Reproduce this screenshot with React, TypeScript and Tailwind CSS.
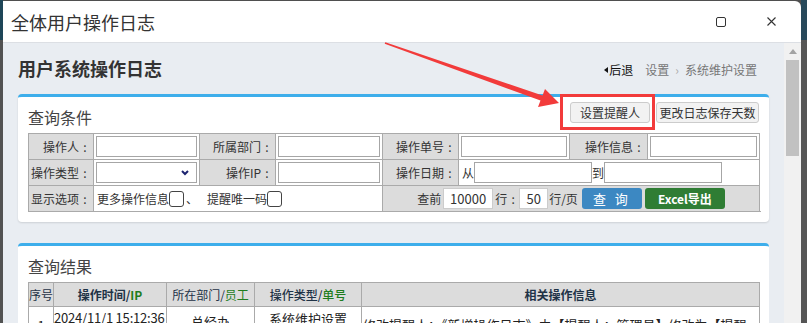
import { ReactNode } from "react";

const cell = "border border-[#aaa] p-0";

function Colon() {
  return <span className="inline-block w-[12px] text-center">:</span>;
}

function Label({ children }: { children: ReactNode }) {
  return (
    <td className={`${cell} bg-[#dcdcdc] pr-[2px] text-right whitespace-nowrap`}>
      {children}
      <Colon />
    </td>
  );
}

function Field({ children }: { children?: ReactNode }) {
  return (
    <td className={`${cell} bg-white px-[2px]`}>
      {children ?? <input className="block h-[21px] w-full border border-[#a6a6a6] bg-white outline-none" />}
    </td>
  );
}

function Check() {
  return <input type="checkbox" className="h-[16px] w-[15px] appearance-none rounded-[3px] border border-[#444] bg-white" />;
}

function Arrow() {
  return (
    <svg className="pointer-events-none absolute left-0 top-0" width="807" height="323" viewBox="0 0 807 323">
      <polygon
        points="385.3,42.3 542.5,95.4 545,89 559,103 538,107 540.5,100.6 384.7,43.7"
        fill="#f23b3b"
      />
    </svg>
  );
}

export default function App() {
  return (
    <div className="relative flex h-[323px] w-[807px] overflow-hidden bg-[#4f4f4f] font-['Noto_Sans_CJK_SC','Microsoft_YaHei',sans-serif]">
      {/* backdrop edges */}
      <div className="flex w-[3px] flex-col">
        <div className="h-[40px] bg-[#1e4658]" />
        <div className="flex-1 bg-[#525252]" />
      </div>

      {/* dialog */}
      <div className="mt-[1px] flex w-[798px] flex-col overflow-hidden rounded-tr-[6px] bg-white">
        <div className="flex h-[42px] shrink-0 items-center justify-between border-b border-[#dcdfe4] pl-[8px] pr-[25px]">
          <span className="text-[18px] leading-[24px] text-[#333]">全体用户操作日志</span>
          <div className="flex items-center gap-[41px]">
            <span className="block h-[10px] w-[10px] rounded-[2px] border border-[#333]" />
            <svg width="9" height="9" viewBox="0 0 9 9" className="text-[#333]">
              <path d="M0.5 0.5L8.5 8.5M8.5 0.5L0.5 8.5" stroke="currentColor" strokeWidth="1.1" />
            </svg>
          </div>
        </div>

        <div className="flex min-h-0 flex-1">
          <main className="min-w-0 flex-1 overflow-hidden bg-[#e9edf2] px-[15px]">
            <div className="flex items-end justify-between pt-[12px]">
              <h1 className="text-[18px] font-bold leading-[26px] text-[#333]">用户系统操作日志</h1>
              <nav className="flex items-center pb-[2px] pr-[12px] text-[12px] leading-[18px] text-[#777]">
                <svg width="4" height="6" viewBox="0 0 4 6" className="mr-[1px]">
                  <path d="M4 0L0 3L4 6Z" fill="#111" />
                </svg>
                <span className="text-[#111]">后退</span>
                <span className="ml-[12px]">设置</span>
                <span className="mx-[6px] text-[#aaa]">›</span>
                <span>系统维护设置</span>
              </nav>
            </div>

            {/* query panel */}
            <section className="mt-[13px] rounded-[4px] border-t-[3px] border-[#3daeeb] bg-white px-[10px] pb-[10px] shadow-[0_1px_2px_rgba(0,0,0,0.12)]">
              <div className="flex h-[36px] items-center justify-between">
                <h2 className="pt-[3px] text-[16px] text-[#444]">查询条件</h2>
                <div className="mb-[5px] flex gap-[6px] text-[12px] text-[#333]">
                  <button className="h-[21px] w-[80px] rounded-[3px] border border-[#ccc] bg-[#f2f2f2]">设置提醒人</button>
                  <button className="h-[21px] w-[103px] rounded-[3px] border border-[#ccc] bg-[#f2f2f2]">更改日志保存天数</button>
                </div>
              </div>

              <table className="w-[731px] table-fixed border-collapse text-[12px] text-[#333]">
                <colgroup>
                  <col className="w-[65px]" />
                  <col className="w-[106px]" />
                  <col className="w-[76px]" />
                  <col className="w-[107px]" />
                  <col className="w-[76px]" />
                  <col className="w-[111px]" />
                  <col className="w-[78px]" />
                  <col className="w-[112px]" />
                </colgroup>
                <tbody>
                  <tr className="h-[26px]">
                    <Label>操作人</Label>
                    <Field />
                    <Label>所属部门</Label>
                    <Field />
                    <Label>操作单号</Label>
                    <Field />
                    <Label>操作信息</Label>
                    <Field />
                  </tr>
                  <tr className="h-[26px]">
                    <Label>操作类型</Label>
                    <Field>
                      <div className="relative h-[21px] w-full border border-[#a6a6a6] bg-white">
                        <svg width="8" height="6" viewBox="0 0 8 6" className="absolute right-[7px] top-[7px]">
                          <path d="M1 1L4 4L7 1" stroke="#1c2470" strokeWidth="2" fill="none" />
                        </svg>
                      </div>
                    </Field>
                    <Label>操作IP</Label>
                    <Field />
                    <Label>操作日期</Label>
                    <td colSpan={3} className={`${cell} bg-white pl-[3px]`}>
                      <div className="flex items-center">
                        <span>从</span>
                        <input className="h-[21px] w-[118px] border border-[#a6a6a6]" />
                        <span>到</span>
                        <input className="h-[21px] w-[118px] border border-[#a6a6a6]" />
                      </div>
                    </td>
                  </tr>
                  <tr className="h-[26px]">
                    <Label>显示选项</Label>
                    <td colSpan={3} className={`${cell} bg-white pl-[3px]`}>
                      <div className="flex items-center">
                        <span>更多操作信息</span>
                        <Check />
                        <span className="ml-[2px] mr-[9px]">、</span>
                        <span>提醒唯一码</span>
                        <Check />
                      </div>
                    </td>
                    <td colSpan={5} className={`${cell} bg-[#dcdcdc]`}>
                      <div className="flex items-center justify-center">
                        <span>查前</span>
                        <input
                          defaultValue="10000"
                          className="ml-[2px] h-[21px] w-[50px] border border-[#ccc] bg-white text-center text-[13px]"
                        />
                        <span className="ml-[2px]">
                          行<Colon />
                        </span>
                        <input
                          defaultValue="50"
                          className="h-[21px] w-[29px] border border-[#ccc] bg-white text-center text-[13px]"
                        />
                        <span className="ml-[1px]">行/页</span>
                        <button className="ml-[4px] h-[21px] w-[60px] rounded-[3px] bg-[#3c88c2] text-[13px] tracking-[3px] text-white">
                          查 询
                        </button>
                        <button className="ml-[3px] h-[21px] w-[80px] rounded-[3px] bg-[#2f7d34] text-[12px] font-bold text-white">
                          Excel导出
                        </button>
                      </div>
                    </td>
                  </tr>
                </tbody>
              </table>
            </section>

            {/* results panel */}
            <section className="mt-[21px] rounded-[4px] border-t-[3px] border-[#3daeeb] bg-white px-[10px] pb-[10px]">
              <div className="flex h-[36px] items-center">
                <h2 className="pt-[3px] text-[16px] text-[#444]">查询结果</h2>
              </div>
              <table className="w-[731px] table-fixed border-collapse text-[12px] text-[#1f3347]">
                <colgroup>
                  <col className="w-[25px]" />
                  <col className="w-[113px]" />
                  <col className="w-[88px]" />
                  <col className="w-[107px]" />
                  <col className="w-[398px]" />
                </colgroup>
                <thead>
                  <tr className="h-[24px] bg-[#dcdcdc]">
                    <th className={`${cell} font-normal`}>序号</th>
                    <th className={`${cell} font-bold`}>
                      操作时间/<span className="text-[#1e7d1e]">IP</span>
                    </th>
                    <th className={`${cell} font-normal`}>
                      所在部门/<span className="text-[#1e7d1e]">员工</span>
                    </th>
                    <th className={`${cell} font-medium`}>
                      操作类型/<span className="text-[#1e7d1e]">单号</span>
                    </th>
                    <th className={`${cell} font-bold`}>相关操作信息</th>
                  </tr>
                </thead>
                <tbody className="text-[13px] text-[#222]">
                  <tr className="h-[60px]">
                    <td className={`${cell} pt-[9px] text-center align-top`}>1</td>
                    <td className={`${cell} overflow-hidden whitespace-nowrap pt-[1px] align-top tracking-[-0.2px]`}>
                      2024/11/1 15:12:36
                      <br />
                      192.168.1.25
                    </td>
                    <td className={`${cell} pt-[5px] text-center align-top`}>
                      总经办
                      <br />
                      管理员
                    </td>
                    <td className={`${cell} pt-[2px] text-center align-top`}>
                      系统维护设置
                      <br />
                      XT20241101
                    </td>
                    <td className={`${cell} pl-[1px] pt-[8px] align-top`}>
                      修改提醒人：《新增操作日志》由【提醒人：管理员】修改为【提醒人：管理员、财务】
                    </td>
                  </tr>
                </tbody>
              </table>
            </section>
          </main>

          {/* scrollbar */}
          <div className="flex w-[17px] flex-col items-center bg-[#f1f1f1]">
            <div className="flex h-[17px] items-center justify-center">
              <svg width="8" height="5" viewBox="0 0 8 5">
                <path d="M0 5L4 0L8 5Z" fill="#a3a3a3" />
              </svg>
            </div>
            <div className="h-[96px] w-[13px] bg-[#c1c1c1]" />
          </div>
        </div>
      </div>

      <div className="flex flex-1 flex-col">
        <div className="h-[40px] bg-[#28495a]" />
        <div className="flex-1 bg-[#555]" />
      </div>

      {/* annotation */}
      <Arrow />
      <div className="pointer-events-none absolute left-[560px] top-[94px] h-[36px] w-[95px] border-[3px] border-[#f23b3b]" />
    </div>
  );
}
